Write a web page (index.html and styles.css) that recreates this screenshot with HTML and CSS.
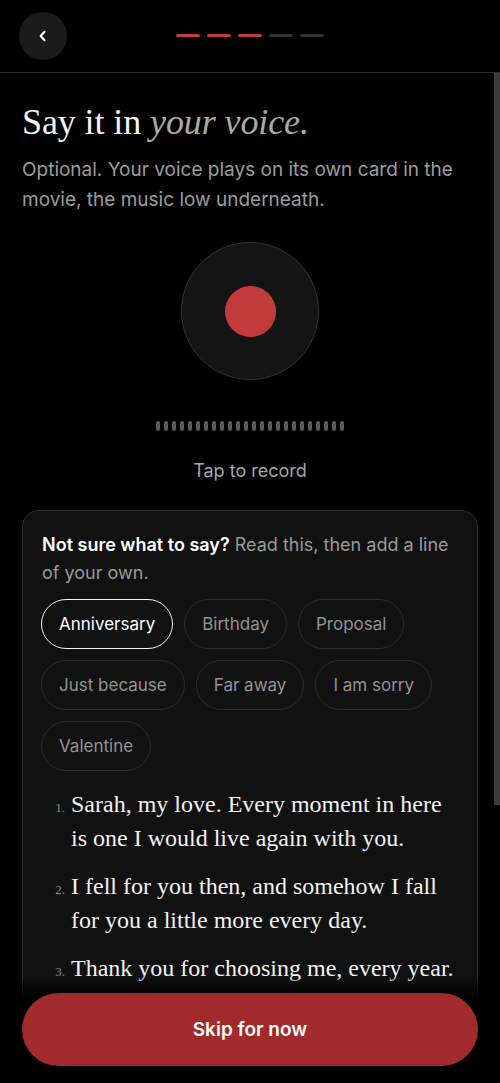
FILE: index.html
```html
<!DOCTYPE html>
<html lang="en">
<head>
<meta charset="utf-8">
<title>Say it in your voice</title>
<link rel="stylesheet" href="styles.css">
</head>
<body>
<div class="app">
  <header class="topbar">
    <button class="back" aria-label="Back">
      <svg width="14" height="14" viewBox="0 0 14 14"><path d="M8.5 2.8 L4.6 7 L8.5 11.2" fill="none" stroke="#fff" stroke-width="2" stroke-linecap="round" stroke-linejoin="round"/></svg>
    </button>
    <div class="progress">
      <span class="seg on"></span><span class="seg on"></span><span class="seg on"></span><span class="seg"></span><span class="seg"></span>
    </div>
    <div></div>
  </header>
  <main class="scroll">
    <h1 class="title">Say it in <em>your voice.</em></h1>
    <p class="sub">Optional. Your voice plays on its own card in the movie, the music low underneath.</p>
    <div class="recorder">
      <button class="rec" aria-label="Record"><span class="rec-dot"></span></button>
      <div class="wave">
        <i></i><i></i><i></i><i></i><i></i><i></i><i></i><i></i><i></i><i></i><i></i><i></i><i></i><i></i><i></i><i></i><i></i><i></i><i></i><i></i><i></i><i></i><i></i><i></i>
      </div>
      <p class="tap">Tap to record</p>
    </div>
    <section class="card">
      <p class="prompt"><strong>Not sure what to say?</strong> Read this, then add a line of your own.</p>
      <div class="chips">
        <span class="chip active">Anniversary</span>
        <span class="chip">Birthday</span>
        <span class="chip">Proposal</span>
        <span class="chip">Just because</span>
        <span class="chip">Far away</span>
        <span class="chip">I am sorry</span>
        <span class="chip">Valentine</span>
      </div>
      <ol class="lines">
        <li><span class="num">1.</span><span class="txt">Sarah, my love. Every moment in here is one I would live again with you.</span></li>
        <li><span class="num">2.</span><span class="txt">I fell for you then, and somehow I fall for you a little more every day.</span></li>
        <li><span class="num">3.</span><span class="txt">Thank you for choosing me, every year. I will keep choosing you, for as long as you let me.</span></li>
        <li><span class="num">4.</span><span class="txt">Here is to us, and every chapter we have not written yet.</span></li>
      </ol>
    </section>
  </main>
  <div class="scroll-thumb" aria-hidden="true"></div>
  <div class="footer">
    <button class="skip">Skip for now</button>
  </div>
</div>
</body>
</html>
```
FILE: styles.css
```css
* { box-sizing: border-box; }
html, body { margin: 0; padding: 0; background: #000; }
body {
  width: 500px;
  height: 1083px;
  overflow: hidden;
  font-family: Inter, "Liberation Sans", sans-serif;
  color: #fff;
}
.app {
  position: relative;
  height: 1083px;
  display: flex;
  flex-direction: column;
}
.topbar {
  flex: 0 0 73px;
  display: grid;
  grid-template-columns: 48px 1fr 48px;
  align-items: center;
  padding: 0 19px 0 19px;
  border-bottom: 1px solid #2c2c2c;
}
.back {
  width: 48px;
  height: 48px;
  margin-bottom: 1px;
  border: 0;
  border-radius: 50%;
  background: #1b1b1b;
  display: flex;
  align-items: center;
  justify-content: center;
  padding: 0;
}
.progress {
  display: flex;
  justify-content: center;
  gap: 7px;
  margin-bottom: 1px;
}
.seg {
  width: 24px;
  height: 3px;
  border-radius: 2px;
  background: #333;
}
.seg.on { background: #c13d3d; }

.scroll {
  flex: 1;
  overflow-y: auto;
  scrollbar-width: none;
  padding: 27px 22px 400px 22px;
}
.scroll::-webkit-scrollbar { display: none; }
.scroll-thumb {
  position: absolute;
  right: 0;
  top: 73px;
  width: 6px;
  height: 732px;
  background: #3b3b3b;
}

.title {
  margin: 0;
  font-family: "Liberation Serif", serif;
  font-weight: 400;
  font-size: 36px;
  line-height: 44px;
  color: #f4f4f4;
  letter-spacing: -0.1px;
}
.title em { color: #a9a9a9; font-style: italic; }
.sub {
  margin: 11px 0 0 0;
  font-size: 19px;
  line-height: 30px;
  color: #9c9c9c;
}
.recorder {
  display: flex;
  flex-direction: column;
  align-items: center;
}
.rec {
  margin-top: 27px;
  width: 138px;
  height: 138px;
  border-radius: 50%;
  background: #141414;
  border: 1px solid #333;
  display: flex;
  align-items: center;
  justify-content: center;
  padding: 0;
}
.rec-dot {
  width: 51px;
  height: 51px;
  border-radius: 50%;
  background: #c23b3b;
}
.wave {
  margin-top: 41px;
  display: flex;
  gap: 4px;
  height: 10px;
}
.wave i {
  display: block;
  width: 4px;
  height: 10px;
  border-radius: 2px;
  background: #5a5a5a;
}
.tap {
  margin: 28px 0 0 0;
  font-size: 18px;
  line-height: 24px;
  color: #a6a6a6;
}
.card {
  margin-top: 27px;
  background: #111;
  border: 1px solid #2a2a2a;
  border-radius: 17px;
  padding: 20px 20px 30px 19px;
}
.prompt {
  margin: 0;
  font-size: 18px;
  line-height: 28px;
  color: #9a9a9a;
}
.prompt strong { color: #fff; font-weight: 600; }
.chips {
  margin-top: 12px;
  margin-left: -1px;
  display: flex;
  flex-wrap: wrap;
  gap: 11px 11px;
}
.chip {
  height: 50px;
  display: inline-flex;
  align-items: center;
  padding: 0 17px;
  border-radius: 25px;
  border: 1px solid #2b2b2b;
  font-size: 17px;
  color: #939393;
}
.chip.active {
  border: 1.5px solid #f2f2f2;
  color: #fff;
}
.lines {
  list-style: none;
  margin: 16px 0 0 0;
  padding: 0;
  display: flex;
  flex-direction: column;
  gap: 14px;
}
.lines li {
  display: flex;
  align-items: baseline;
  gap: 6px;
}
.num {
  flex: 0 0 23px;
  text-align: right;
  font-family: "Liberation Serif", serif;
  font-size: 13px;
  color: #8a8a8a;
}
.txt {
  font-family: "Liberation Serif", serif;
  font-size: 24px;
  line-height: 34px;
  color: #f2f2f2;
}
.footer {
  position: absolute;
  left: 0;
  right: 6px;
  bottom: 0;
  height: 104px;
  padding: 0 16px 17px 22px;
  display: flex;
  align-items: flex-end;
  background: linear-gradient(to bottom, rgba(0,0,0,0.2) 0%, rgba(0,0,0,0.8) 16%, #000 24%);
}
.skip {
  width: 456px;
  height: 73px;
  border: 0;
  border-radius: 37px;
  background: #a12a2c;
  color: #fff;
  font-family: Inter, "Liberation Sans", sans-serif;
  font-size: 19px;
  font-weight: 600;
}
```
